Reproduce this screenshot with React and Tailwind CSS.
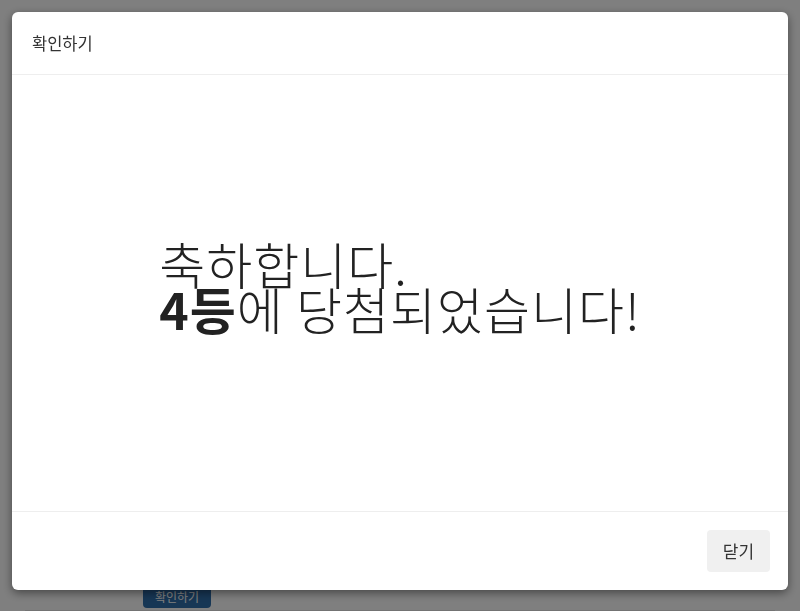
import React from 'react';

const font = { fontFamily: '"Noto Sans CJK KR", "Noto Sans", sans-serif' };

export default function App() {
  return (
    <div className="relative w-[800px] h-[611px] overflow-hidden bg-white" style={font}>
      {/* page behind the dialog */}
      <div className="flex flex-col pt-[583px]">
        <div className="pl-[143px]">
          <button className="w-[68px] h-[22px] rounded bg-[#2f6eab] text-white text-[12px] leading-[22px]">확인하기</button>
        </div>
        <div className="mx-[25px] mt-[2px] border-t border-[#e6e6e6] flex gap-7 pl-[308px] pt-[2px] text-[15px] text-[#333] leading-[18px]">
          <span>상품명</span><span>당첨일자</span><span>수령방법</span><span>상태</span>
        </div>
      </div>

      {/* overlay */}
      <div className="fixed inset-0 bg-black/50 flex px-[12px] pt-[12px]">
        <div className="flex flex-col w-full h-[578px] bg-white rounded-md shadow-[0_3px_10px_rgba(0,0,0,0.45)]">
          {/* header */}
          <div className="h-[63px] flex items-center px-5 border-b border-[#eeeeee]">
            <h2 className="text-[16.5px] text-[#333333] font-normal">확인하기</h2>
          </div>

          {/* body */}
          <div className="flex-1 flex justify-center pt-[166px]">
            <p className="text-[50px] leading-[45px] tracking-[1px] text-[#222222] font-light">
              축하합니다.
              <br />
              <span className="font-bold">4등</span>에 당첨되었습니다!
            </p>
          </div>

          {/* footer */}
          <div className="h-[79px] flex items-center justify-end px-[18px] border-t border-[#eeeeee]">
            <button className="w-[63px] h-[42px] bg-[#f0f0f0] text-[17px] text-[#333333] rounded-sm">닫기</button>
          </div>
        </div>
      </div>
    </div>
  );
}
